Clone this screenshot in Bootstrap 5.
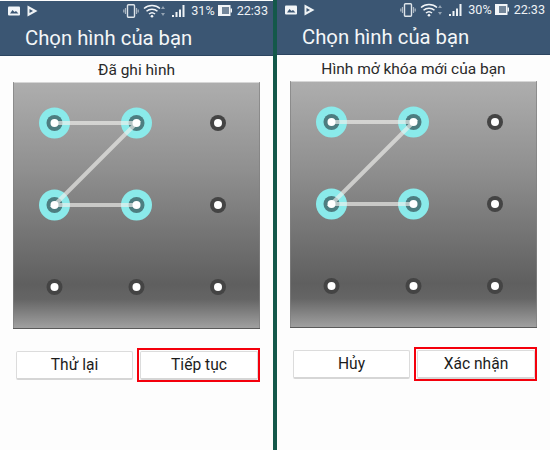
<!DOCTYPE html>
<html lang="vi">
<head>
<meta charset="utf-8">
<title>Chọn hình của bạn</title>
<link href="https://cdn.jsdelivr.net/npm/bootstrap@5.3.0/dist/css/bootstrap.min.css" rel="stylesheet">
<style>
html,body{margin:0;width:550px;height:450px;overflow:hidden;background:#14584a;font-family:Roboto,"Noto Sans",sans-serif}
.shot{width:550px;height:450px;gap:4px}
.pane{width:273px;height:450px;background:#fdfdfd;color:#222}
.pane-a{padding-top:1px}
.appbar{background:#3b5673;color:#f2f5f8;border-bottom:1px solid #2c4560;height:55px}
.stat{height:19px;padding:0 5px 0 8px;font-size:12.6px;line-height:19px;color:#eef2f5}
.stat svg{display:block}
.ic-play{margin-left:6px}
.ic-wifi{margin-left:4px}
.ic-sig{margin-left:7px}
.st-pct{margin-left:6px}
.ic-bat{margin-left:3px}
.st-time{margin-left:5px}
.ttl{font-size:20.3px;line-height:26px;padding-left:25px;margin-top:5px;color:#f4f6f8}
.cap{font-size:15.5px;line-height:20px;text-align:center;margin-top:4px;height:22px;color:#2a2a2a}
.board{display:block;margin-left:13px;width:247px;height:247px}
.acts{margin-top:19px;padding-left:13px;width:261px}
.slot{padding:1px 0 0 1px;border:2px solid transparent}
.slot-l{width:122px}
.slot-r{width:123px;margin-left:2px}
.slot-r.hot{border-color:#f4000c}
.pbtn{display:block;width:117px;height:29px;padding:0;border:1px solid #dcdcdc;border-bottom:2px solid #d6d6d6;border-radius:2px;background:#fff;color:#1c1c1c;font-size:15.6px;line-height:27px;text-align:center}
.slot-r .pbtn{width:118px}
</style>
</head>
<body>
<div class="shot d-flex">
  <section class="pane pane-a d-flex flex-column">
    <header class="appbar">
      <div class="stat d-flex align-items-center">
        <svg width="13" height="10" viewBox="0 0 13 10"><rect width="12" height="9" y=".5" rx="1" fill="#f2f5f8"/><path d="M2 7.500 4.500 4l2 2 1.500-1 2.500 2.500z" fill="#3b5673"/></svg>
        <svg class="ic-play" width="11" height="12" viewBox="0 0 11 12"><path d="M.5.500 10.500 6 .5 11.500z" fill="#eef2f5"/><path d="M2.500 4 6 6 2.500 8z" fill="#3b5673"/></svg>
        <svg width="16" height="14" viewBox="0 0 16 14" class="ms-auto"><rect x="4.500" y=".8" width="7" height="12.400" rx="1" fill="none" stroke="#dfe5ea" stroke-width="1.400"/><path d="M2.500 4v6M.8 5.500v3M13.500 4v6M15.200 5.500v3" stroke="#aab6c2" stroke-width="1.200"/></svg>
        <svg class="ic-wifi" width="18" height="14" viewBox="0 0 18 14"><path d="M1 4.500C5.500.5 12.500.5 17 4.500M3.500 7.300c3-2.700 8-2.700 11 0M6 10c1.700-1.500 4.300-1.500 6 0" fill="none" stroke="#f2f5f8" stroke-width="1.500"/><circle cx="9" cy="12.300" r="1.300" fill="#f2f5f8"/></svg>
        <svg width="4" height="10" viewBox="0 0 4 10"><path d="M2 0 4 3H0zM2 10 0 7h4z" fill="#93a3b3"/></svg>
        <svg class="ic-sig" width="13" height="12" viewBox="0 0 13 12"><path d="M0 10h2v2H0zM3.500 7h2v5h-2zM7 4.500h2V12H7zM10.500 0h2v12h-2z" fill="#eef2f5"/></svg>
        <span class="st-pct">31%</span>
        <svg class="ic-bat" width="14" height="11" viewBox="0 0 14 11"><path d="M0 0h12.500v11H0z" fill="#f2f5f8"/><path d="M4 2H11v7H4z" fill="#73869a"/><path d="M12.500 3.500H14v4h-1.500z" fill="#f2f5f8"/></svg>
        <span class="st-time">22:33</span>
      </div>
      <div class="ttl">Chọn hình của bạn</div>
    </header>
    <div class="cap">Đã ghi hình</div>
    <svg class="board" viewBox="0 0 247 247">
      <defs>
        <linearGradient id="ga" x1="0" y1="0" x2="0" y2="1">
          <stop offset="0" stop-color="#aeaeae"/><stop offset=".35" stop-color="#909090"/><stop offset=".82" stop-color="#5f5f5f"/><stop offset=".88" stop-color="#656565"/><stop offset="1" stop-color="#a2a2a2"/>
        </linearGradient>
      </defs>
      <rect width="247" height="247" fill="url(#ga)"/>
      <path d="M0 .5H247" stroke="#d6d6d6"/><path d="M.5 0V247M246.500 0V247" stroke="#808080" stroke-opacity=".7"/><path d="M0 246.500H247" stroke="#5a5a5a"/>
      <g fill="#8aeaea"><circle cx="41.500" cy="41" r="15.500"/><circle cx="123.500" cy="41" r="15.500"/><circle cx="41.500" cy="123" r="15.500"/><circle cx="123.500" cy="123" r="15.500"/></g>
      <g fill="#4d7d80"><circle cx="41.500" cy="41" r="8"/><circle cx="123.500" cy="41" r="8"/><circle cx="41.500" cy="123" r="8"/><circle cx="123.500" cy="123" r="8"/></g>
      <path d="M41.500 41H123.500L41.500 123H123.500" fill="none" stroke="#efefec" stroke-opacity=".65" stroke-width="4"/>
      <g fill="#444"><circle cx="205" cy="41" r="8"/><circle cx="205" cy="123" r="8"/><circle cx="41.500" cy="205" r="8"/><circle cx="123.500" cy="205" r="8"/><circle cx="205" cy="205" r="8"/></g>
      <g fill="#fff"><circle cx="41.500" cy="41" r="4"/><circle cx="123.500" cy="41" r="4"/><circle cx="205" cy="41" r="4"/><circle cx="41.500" cy="123" r="4"/><circle cx="123.500" cy="123" r="4"/><circle cx="205" cy="123" r="4"/><circle cx="41.500" cy="205" r="4"/><circle cx="123.500" cy="205" r="4"/><circle cx="205" cy="205" r="4"/></g>
    </svg>
    <div class="acts d-flex">
      <div class="slot slot-l"><button type="button" class="pbtn">Thử lại</button></div>
      <div class="slot slot-r hot"><button type="button" class="pbtn">Tiếp tục</button></div>
    </div>
  </section>
  <section class="pane pane-b d-flex flex-column">
    <header class="appbar">
      <div class="stat d-flex align-items-center">
        <svg width="13" height="10" viewBox="0 0 13 10"><rect width="12" height="9" y=".5" rx="1" fill="#f2f5f8"/><path d="M2 7.500 4.500 4l2 2 1.500-1 2.500 2.500z" fill="#3b5673"/></svg>
        <svg class="ic-play" width="11" height="12" viewBox="0 0 11 12"><path d="M.5.500 10.500 6 .5 11.500z" fill="#eef2f5"/><path d="M2.500 4 6 6 2.500 8z" fill="#3b5673"/></svg>
        <svg width="16" height="14" viewBox="0 0 16 14" class="ms-auto"><rect x="4.500" y=".8" width="7" height="12.400" rx="1" fill="none" stroke="#dfe5ea" stroke-width="1.400"/><path d="M2.500 4v6M.8 5.500v3M13.500 4v6M15.200 5.500v3" stroke="#aab6c2" stroke-width="1.200"/></svg>
        <svg class="ic-wifi" width="18" height="14" viewBox="0 0 18 14"><path d="M1 4.500C5.500.5 12.500.5 17 4.500M3.500 7.300c3-2.700 8-2.700 11 0M6 10c1.700-1.500 4.300-1.500 6 0" fill="none" stroke="#f2f5f8" stroke-width="1.500"/><circle cx="9" cy="12.300" r="1.300" fill="#f2f5f8"/></svg>
        <svg width="4" height="10" viewBox="0 0 4 10"><path d="M2 0 4 3H0zM2 10 0 7h4z" fill="#93a3b3"/></svg>
        <svg class="ic-sig" width="13" height="12" viewBox="0 0 13 12"><path d="M0 10h2v2H0zM3.500 7h2v5h-2zM7 4.500h2V12H7zM10.500 0h2v12h-2z" fill="#eef2f5"/></svg>
        <span class="st-pct">30%</span>
        <svg class="ic-bat" width="14" height="11" viewBox="0 0 14 11"><path d="M0 0h12.500v11H0z" fill="#f2f5f8"/><path d="M4 2H11v7H4z" fill="#73869a"/><path d="M12.500 3.500H14v4h-1.500z" fill="#f2f5f8"/></svg>
        <span class="st-time">22:33</span>
      </div>
      <div class="ttl">Chọn hình của bạn</div>
    </header>
    <div class="cap">Hình mở khóa mới của bạn</div>
    <svg class="board" viewBox="0 0 247 247">
      <defs>
        <linearGradient id="gb" x1="0" y1="0" x2="0" y2="1">
          <stop offset="0" stop-color="#aeaeae"/><stop offset=".35" stop-color="#909090"/><stop offset=".82" stop-color="#5f5f5f"/><stop offset=".88" stop-color="#656565"/><stop offset="1" stop-color="#a2a2a2"/>
        </linearGradient>
      </defs>
      <rect width="247" height="247" fill="url(#gb)"/>
      <path d="M0 .5H247" stroke="#d6d6d6"/><path d="M.5 0V247M246.500 0V247" stroke="#808080" stroke-opacity=".7"/><path d="M0 246.500H247" stroke="#5a5a5a"/>
      <g fill="#8aeaea"><circle cx="41.500" cy="41" r="15.500"/><circle cx="123.500" cy="41" r="15.500"/><circle cx="41.500" cy="123" r="15.500"/><circle cx="123.500" cy="123" r="15.500"/></g>
      <g fill="#4d7d80"><circle cx="41.500" cy="41" r="8"/><circle cx="123.500" cy="41" r="8"/><circle cx="41.500" cy="123" r="8"/><circle cx="123.500" cy="123" r="8"/></g>
      <path d="M41.500 41H123.500L41.500 123H123.500" fill="none" stroke="#efefec" stroke-opacity=".65" stroke-width="4"/>
      <g fill="#444"><circle cx="205" cy="41" r="8"/><circle cx="205" cy="123" r="8"/><circle cx="41.500" cy="205" r="8"/><circle cx="123.500" cy="205" r="8"/><circle cx="205" cy="205" r="8"/></g>
      <g fill="#fff"><circle cx="41.500" cy="41" r="4"/><circle cx="123.500" cy="41" r="4"/><circle cx="205" cy="41" r="4"/><circle cx="41.500" cy="123" r="4"/><circle cx="123.500" cy="123" r="4"/><circle cx="205" cy="123" r="4"/><circle cx="41.500" cy="205" r="4"/><circle cx="123.500" cy="205" r="4"/><circle cx="205" cy="205" r="4"/></g>
    </svg>
    <div class="acts d-flex">
      <div class="slot slot-l"><button type="button" class="pbtn">Hủy</button></div>
      <div class="slot slot-r hot"><button type="button" class="pbtn">Xác nhận</button></div>
    </div>
  </section>
</div>
<script src="https://cdn.jsdelivr.net/npm/bootstrap@5.3.0/dist/js/bootstrap.bundle.min.js"></script>
</body>
</html>
